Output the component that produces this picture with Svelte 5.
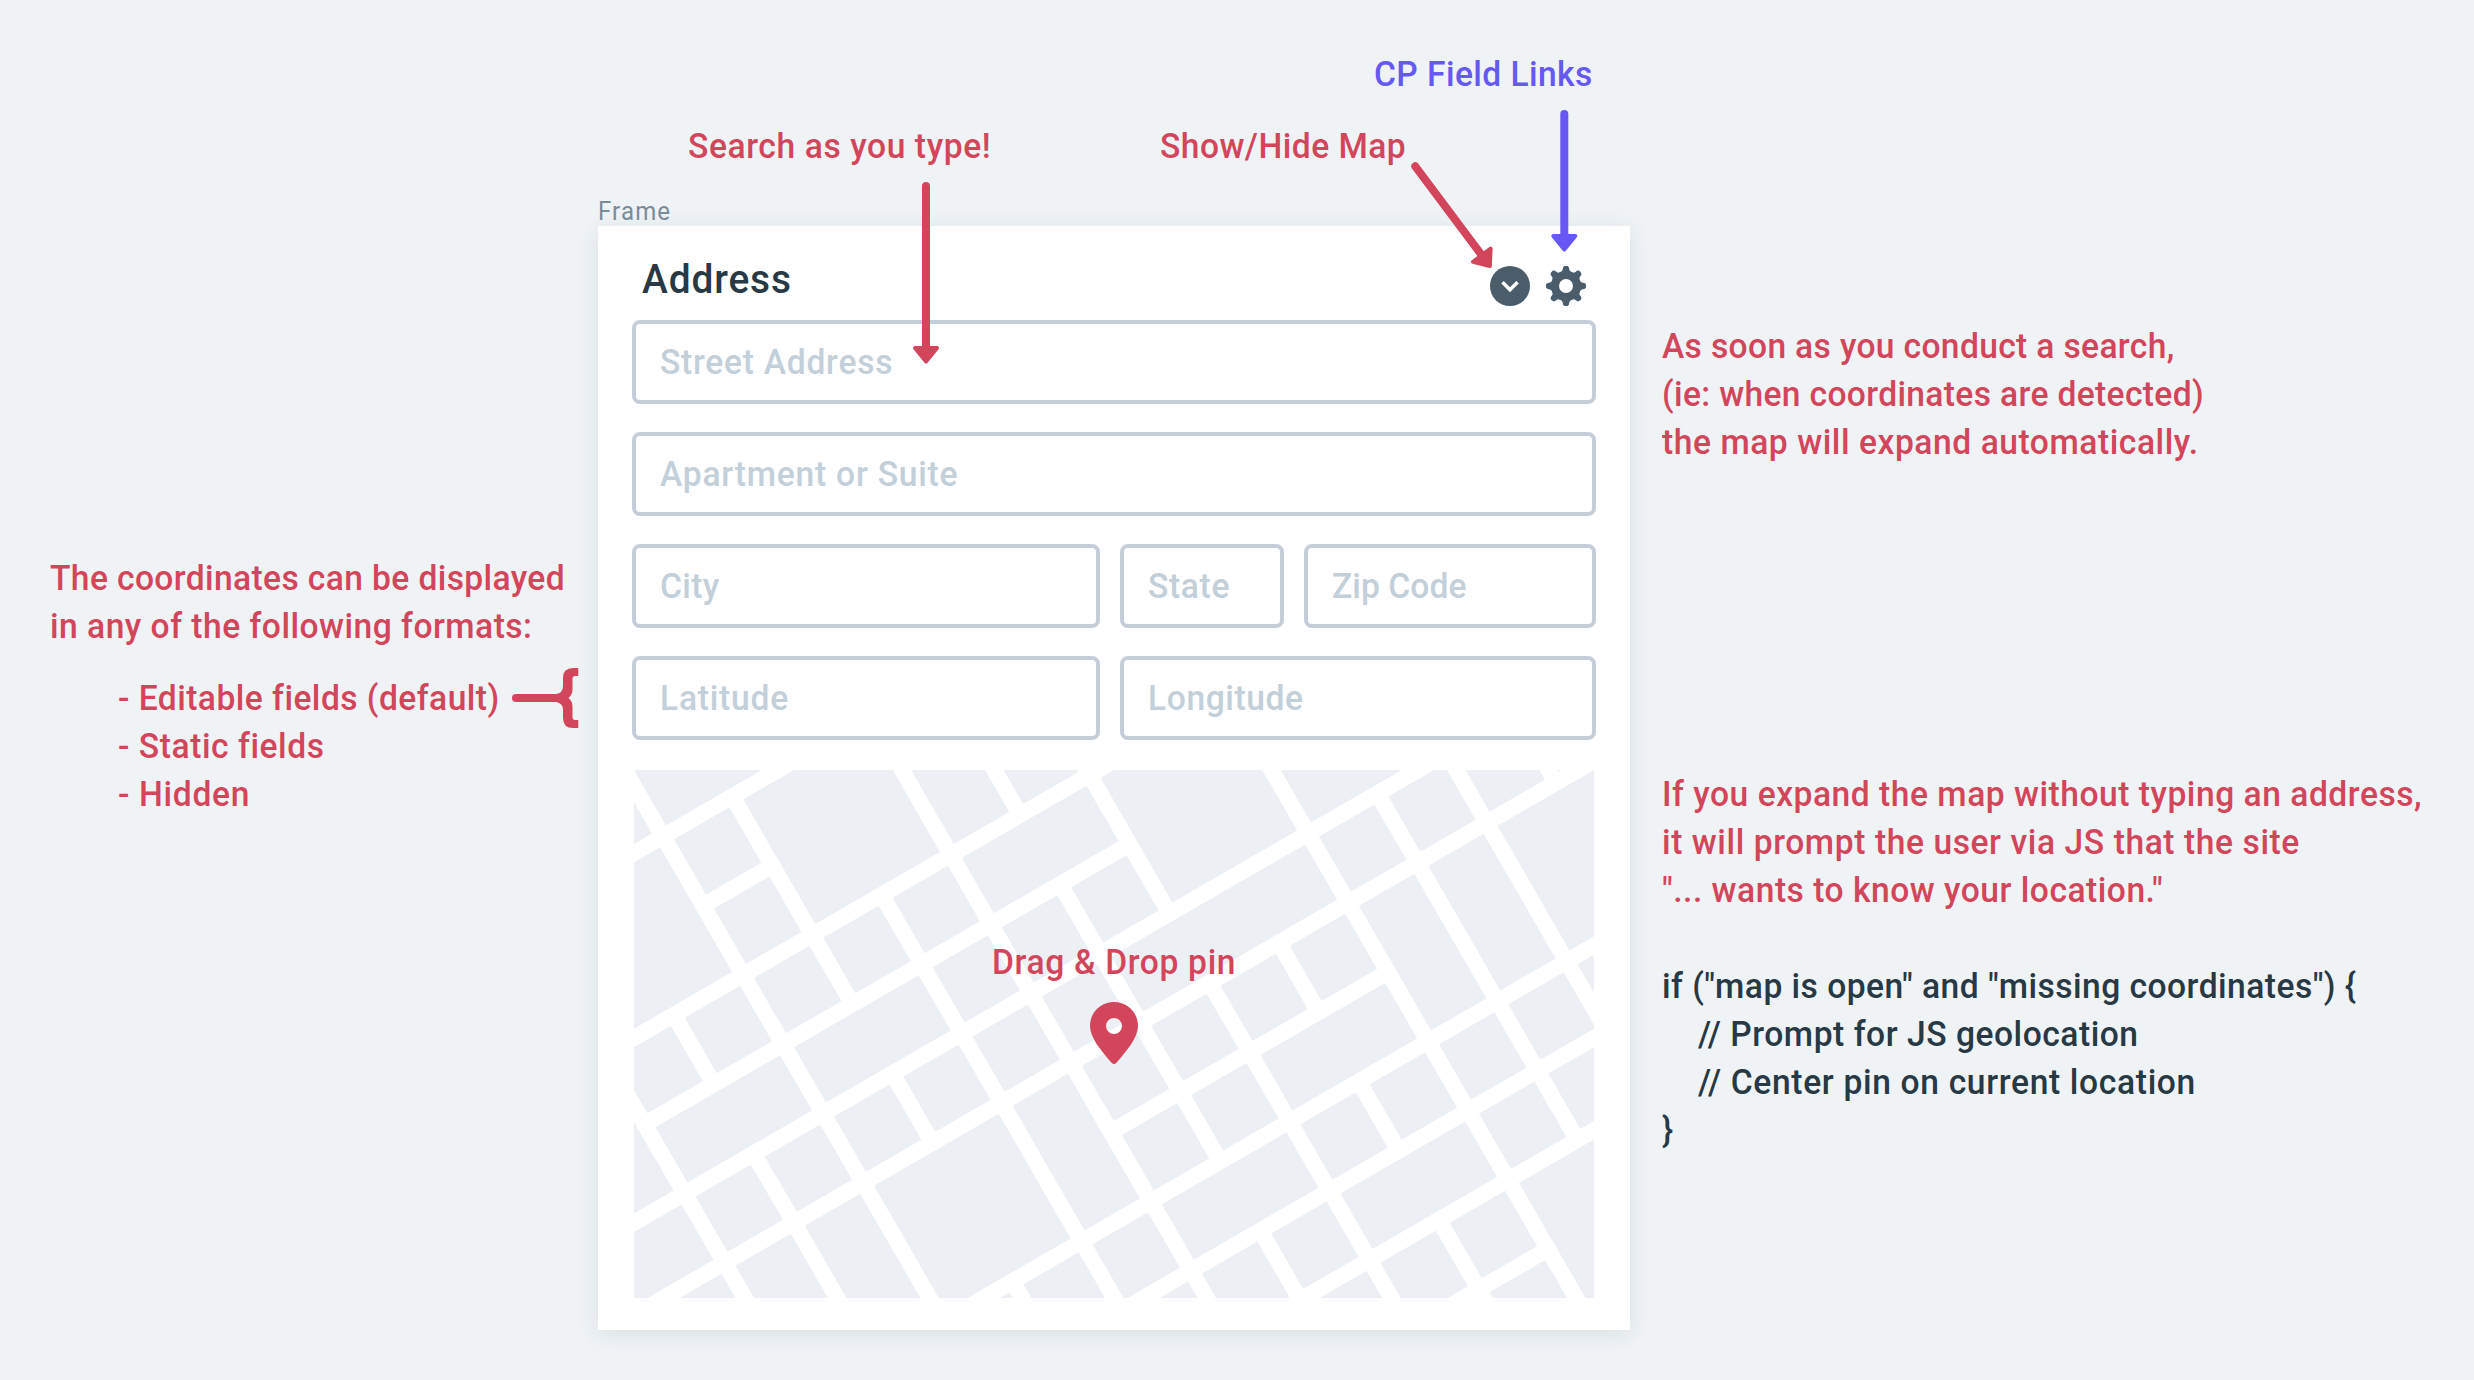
<script>
  // Glyphs are condensed by this factor; tracking then makes each line the given width.
  const CONDENSE = 0.96;

  function fit(node, width) {
    const spacing = (width / CONDENSE - node.offsetWidth) / node.textContent.length;
    node.style.letterSpacing = `${spacing.toFixed(3)}px`;
  }

  const notes = [
    { x: 688, y: 123, tone: 'red', lines: [['Search as you type!', 303]] },
    { x: 1160, y: 123, tone: 'red', lines: [['Show/Hide Map', 246]] },
    { x: 1374, y: 51, tone: 'purple', lines: [['CP Field Links', 219]] },
    {
      x: 50, y: 555, tone: 'red',
      lines: [['The coordinates can be displayed', 515], ['in any of the following formats:', 482]]
    },
    {
      x: 118, y: 675, tone: 'red',
      lines: [['- Editable fields (default)', 381], ['- Static fields', 206], ['- Hidden', 132]]
    },
    {
      x: 1662, y: 323, tone: 'red',
      lines: [
        ['As soon as you conduct a search,', 513],
        ['(ie: when coordinates are detected)', 542],
        ['the map will expand automatically.', 537]
      ]
    },
    {
      x: 1662, y: 771, tone: 'red',
      lines: [
        ['If you expand the map without typing an address,', 760],
        ['it will prompt the user via JS that the site', 638],
        ['"... wants to know your location."', 501]
      ]
    },
    { x: 1662, y: 963, tone: 'dark', lines: [['if ("map is open" and "missing coordinates") {', 695]] },
    {
      x: 1698, y: 1011, tone: 'dark',
      lines: [['// Prompt for JS geolocation', 441], ['// Center pin on current location', 498]]
    },
    { x: 1662, y: 1107, tone: 'dark', lines: [['}', 12]] }
  ];

  const rows = [
    { cols: 'one', fields: [['Street Address', 233]] },
    { cols: 'one', fields: [['Apartment or Suite', 298]] },
    { cols: 'three', fields: [['City', 60], ['State', 82], ['Zip Code', 135]] },
    { cols: 'two', fields: [['Latitude', 129], ['Longitude', 156]] }
  ];

  // City blocks on a tilted 80px street grid: column, row, columns spanned, rows spanned.
  const blocks = [
    [-1, 0, 1, 1], [0, 0, 2, 1],
    [-2, 1, 2, 2], [0, 1, 1, 1], [0, 2, 1, 1], [1, 1, 2, 2], [3, 1, 1, 2], [4, 2, 1, 1],
    [-3, 3, 1, 2], [-2, 3, 1, 1], [-1, 3, 1, 1], [0, 3, 1, 1], [1, 3, 1, 1], [2, 3, 1, 1], [3, 3, 2, 1], [5, 3, 2, 2],
    [-2, 4, 2, 1], [0, 4, 2, 1], [2, 4, 1, 1], [3, 4, 1, 1], [4, 4, 1, 1], [7, 4, 2, 1],
    [-4, 5, 2, 1], [-2, 5, 1, 1], [-1, 5, 1, 1], [0, 5, 1, 1], [1, 5, 1, 1], [2, 5, 1, 1], [3, 5, 1, 1], [4, 5, 3, 1],
    [7, 5, 1, 1], [8, 5, 1, 1], [9, 5, 1, 1], [10, 5, 1, 1],
    [-3, 6, 1, 1], [-2, 6, 1, 2], [-1, 6, 1, 2], [0, 6, 2, 2], [2, 6, 1, 2], [3, 6, 1, 1], [4, 6, 1, 1], [5, 6, 1, 1],
    [6, 6, 1, 1], [7, 6, 1, 2], [8, 6, 1, 2], [9, 6, 2, 2],
    [3, 7, 1, 1], [4, 7, 1, 1], [5, 7, 2, 1],
    [0, 8, 1, 1], [1, 8, 1, 1], [2, 8, 1, 1], [3, 8, 2, 1], [5, 8, 1, 1], [6, 8, 1, 1], [7, 8, 1, 1], [8, 8, 1, 1], [9, 8, 1, 1],
    [2, 9, 1, 1], [3, 9, 1, 1], [4, 9, 1, 1], [5, 9, 2, 1], [7, 9, 1, 1], [8, 9, 1, 1],
    [4, 10, 1, 1], [5, 10, 1, 1], [6, 10, 1, 1], [7, 10, 2, 2], [6, 11, 1, 1]
  ];

  const arrows = [
    { x: 926, y: 186, angle: 0, length: 178, tone: 'red' },
    { x: 1415.3, y: 166.3, angle: -36.8, length: 127, tone: 'red' },
    { x: 1564.3, y: 114, angle: 0, length: 138, tone: 'purple' }
  ];

  const teeth = [0, 45, 90, 135, 180, 225, 270, 315];
</script>

<main class="board">
  <section class="frame">
    <div class="frame-label"><span class="fit" use:fit={73}>Frame</span></div>
    <div class="card">
      <header class="head">
        <h1><span class="fit" use:fit={150}>Address</span></h1>
        <div class="tools">
          <svg width="40" height="40" viewBox="-20 -20 40 40" aria-label="Toggle map">
            <circle class="tool" r="20" />
            <path class="chevron" d="M-7.5-3.800 0 3.700 7.500-3.800" />
          </svg>
          <svg width="40" height="40" viewBox="-20 -20 40 40" aria-label="Field settings">
            <circle class="ring" r="11" />
            {#each teeth as angle}
              <path class="tool" transform="rotate({angle})" d="M-6-13.500Q-3.300-14.500-3.200-17A3.200 3.200 0 0 1 3.200-17Q3.300-14.500 6-13.500L3-10H-3Z" />
            {/each}
          </svg>
        </div>
      </header>

      <div class="form">
        {#each rows as row}
          <div class="row {row.cols}">
            {#each row.fields as [label, width]}
              <div class="field"><span class="fit" use:fit={width}>{label}</span></div>
            {/each}
          </div>
        {/each}
      </div>

      <div class="map">
        <svg class="streets" width="960" height="528" viewBox="0 0 960 528">
          <g transform="rotate(-30)">
            {#each blocks as [c, r, w, h]}
              <rect x={c * 80} y={r * 80} width={w * 80 - 16} height={h * 80 - 16} />
            {/each}
          </g>
        </svg>
        <div class="marker">
          <div class="marker-label"><span class="fit" use:fit={244}>Drag &amp; Drop pin</span></div>
          <svg width="48" height="62" viewBox="0 0 48 62">
            <path class="pin" fill-rule="evenodd" d="M24 0C10.700 0 0 10.500 0 24c0 11.500 10.500 24 21.800 37q2.200 2 4.400 0C37.500 48 48 35.500 48 24 48 10.500 37.300 0 24 0ZM24 16a8 8 0 1 1 0 16a8 8 0 1 1 0-16Z" />
          </svg>
        </div>
      </div>
    </div>
  </section>

  {#each notes as note}
    <div class="note {note.tone}" style="left: {note.x}px; top: {note.y}px">
      {#each note.lines as [text, width]}
        <div class="line"><span class="fit" use:fit={width}>{text}</span></div>
      {/each}
    </div>
  {/each}

  <svg class="overlay" width="2474" height="1380" viewBox="0 0 2474 1380">
    {#each arrows as a}
      <g class="arrow {a.tone}" transform="translate({a.x} {a.y}) rotate({a.angle})">
        <line y2={a.length - 14} />
        <path d="M-11 {a.length - 16}H11L0 {a.length - 2.5}Z" />
      </g>
    {/each}
    <path class="brace" d="M516 694H556Q563 693 563 686V678Q563 668 573 668H578.300V676H575Q572.500 676 572.500 679V689Q572.500 695 568.500 698Q572.500 701 572.500 707V717Q572.500 720 575 720H578.300V728H573Q563 728 563 718V710Q563 703 556 702H516A4 4 0 0 1 516 694Z" />
  </svg>
</main>

<style>
  :global(body) {
    margin: 0;
    background: #eff3f6;
  }

  .board {
    position: relative;
    width: 2474px;
    height: 1380px;
    overflow: hidden;
    background: #eff3f6;
    font-family: Roboto, 'Liberation Sans', sans-serif;
    font-size: 35px;
    font-weight: 500;
    line-height: 48px;
  }

  .fit {
    display: inline-block;
    white-space: pre;
    transform: scaleX(0.96);
    transform-origin: 0 50%;
  }

  .frame {
    position: absolute;
    left: 598px;
    top: 196px;
    width: 1032px;
  }

  .frame-label {
    height: 30px;
    font-size: 25px;
    font-weight: 400;
    line-height: 32px;
    color: #7a8b9a;
  }

  .card {
    box-sizing: border-box;
    height: 1104px;
    padding: 0 34px;
    background: #fff;
    box-shadow: 0 4px 20px rgba(40, 56, 69, 0.1);
  }

  .head {
    display: flex;
    justify-content: space-between;
    height: 94px;
    padding: 0 10px;
  }

  h1 {
    margin: 29px 0 0;
    font-size: 40.500px;
    font-weight: 500;
    line-height: 48px;
    color: #283845;
  }

  .tools {
    display: flex;
    gap: 16px;
    margin-top: 40px;
  }

  .tool {
    fill: #4b5c6b;
  }

  .ring {
    fill: none;
    stroke: #4b5c6b;
    stroke-width: 8;
  }

  .chevron {
    fill: none;
    stroke: #fff;
    stroke-width: 3.600;
  }

  .form {
    display: grid;
    gap: 28px;
  }

  .row {
    display: grid;
    gap: 20px;
  }

  .one {
    grid-template-columns: 964px;
  }

  .two {
    grid-template-columns: 468px 476px;
  }

  .three {
    grid-template-columns: 468px 164px 292px;
  }

  .field {
    box-sizing: border-box;
    height: 84px;
    padding: 15px 0 0 24px;
    border: 4px solid #c5ced8;
    border-radius: 8px;
    color: #c3cfd9;
  }

  .map {
    position: relative;
    width: 960px;
    height: 528px;
    margin: 30px 0 0 2px;
  }

  .streets {
    display: block;
    fill: #eceff4;
  }

  .marker {
    position: absolute;
    left: 358px;
    top: 169px;
    width: 244px;
    color: #d3455b;
  }

  .marker svg {
    display: block;
    margin: 15px auto 0;
  }

  .pin {
    fill: #d3455b;
  }

  .note {
    position: absolute;
    white-space: nowrap;
  }

  .line {
    height: 48px;
  }

  .red {
    color: #d3455b;
  }

  .purple {
    color: #6558f5;
  }

  .dark {
    color: #283845;
  }

  .overlay {
    position: absolute;
    inset: 0;
  }

  .arrow {
    fill: currentColor;
    stroke: currentColor;
    stroke-linecap: round;
    stroke-linejoin: round;
  }

  .arrow line {
    stroke-width: 8;
  }

  .arrow path {
    stroke-width: 4;
  }

  .brace {
    fill: #d3455b;
  }
</style>
